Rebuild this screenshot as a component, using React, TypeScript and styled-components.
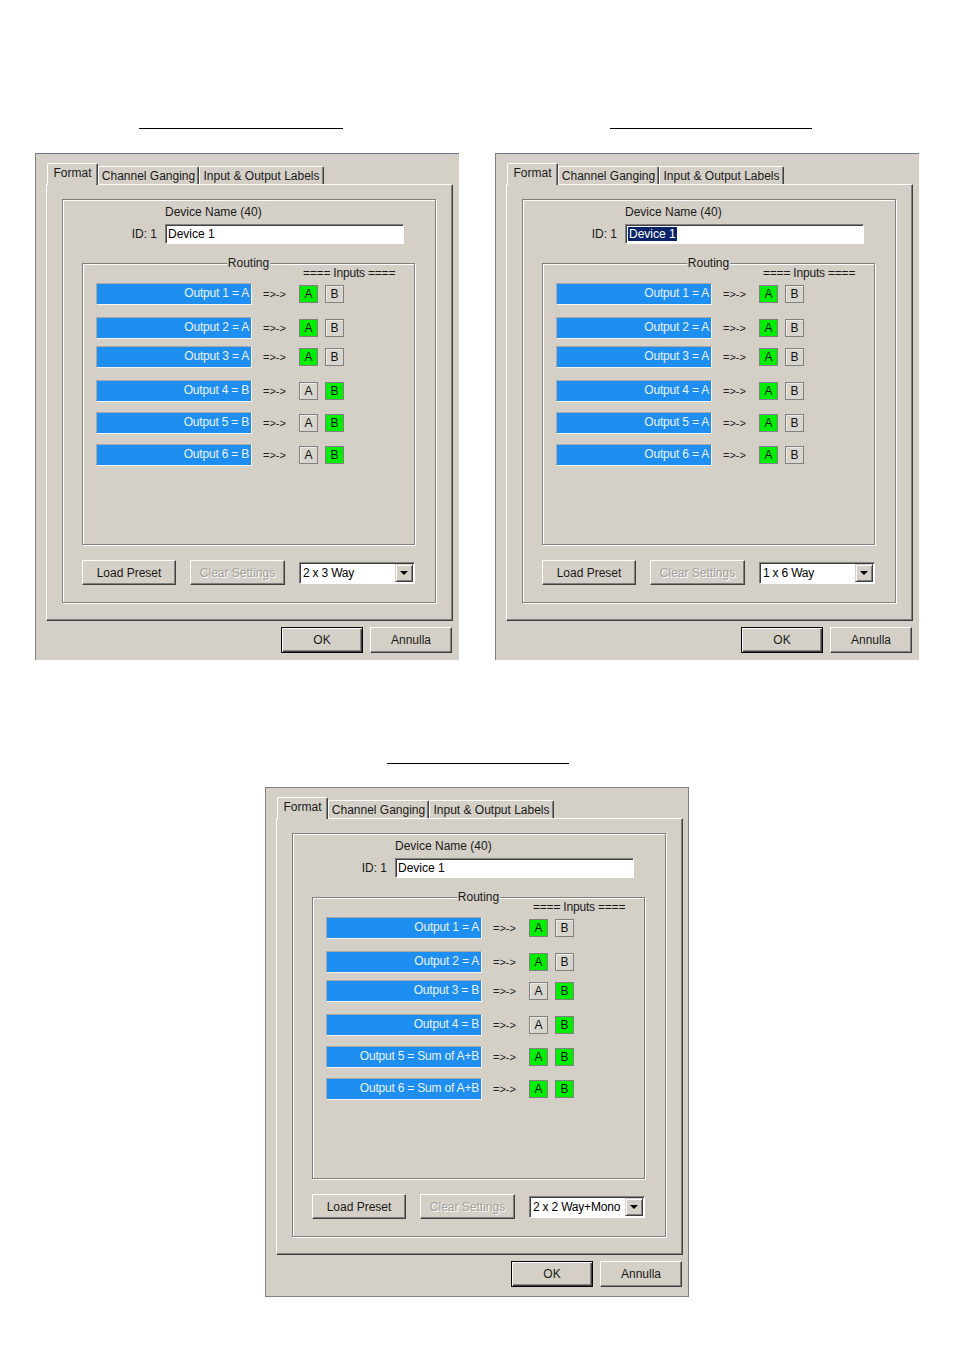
import React from 'react';
import styled, { createGlobalStyle } from 'styled-components';

const face = '#d4d0c8';
const shadow = '#808080';
const darkShadow = '#404040';

const GlobalStyle = createGlobalStyle`
  body {
    margin: 0;
    background: #fff;
    font-family: 'Liberation Sans', Arial, sans-serif;
    font-size: 12px;
    color: #1a1a1a;
  }
`;

const Page = styled.div`
  width: 954px;
  height: 1351px;
  padding-top: 128px;
  box-sizing: border-box;
`;

const TopRow = styled.div`
  display: flex;
  gap: 36px;
  padding-left: 35px;
`;

const BottomRow = styled.div`
  display: flex;
  padding-left: 265px;
  margin-top: 103px;
`;

const Column = styled.div`
  display: flex;
  flex-direction: column;
  width: 424px;
`;

const Underline = styled.div<{ $left: number; $width: number; $space: number }>`
  height: 1px;
  width: ${(p) => p.$width}px;
  margin-left: ${(p) => p.$left}px;
  margin-bottom: ${(p) => p.$space}px;
  background: #000;
`;

const Window = styled.div<{ $full?: boolean }>`
  width: 424px;
  height: ${(p) => (p.$full ? 510 : 507)}px;
  box-sizing: border-box;
  background: ${face};
  padding: 9px 0 0 10px;
  border-left: 1px solid ${shadow};
  border-top: 1px solid ${(p) => (p.$full ? shadow : '#6b7896')};
  border-right: ${(p) => (p.$full ? `1px solid ${shadow}` : 'none')};
  border-bottom: ${(p) => (p.$full ? `1px solid ${shadow}` : 'none')};
`;

const TabStrip = styled.div`
  display: flex;
  align-items: flex-end;
  height: 21px;
  position: relative;
  z-index: 1;
`;

const Tab = styled.div<{ $active?: boolean; $width: number }>`
  width: ${(p) => p.$width}px;
  height: ${(p) => (p.$active ? 22 : 18)}px;
  margin-left: ${(p) => (p.$active ? 1 : 0)}px;
  margin-bottom: ${(p) => (p.$active ? -1 : 0)}px;
  box-sizing: border-box;
  background: ${face};
  border-top: 1px solid #fff;
  border-left: 1px solid #fff;
  border-right: 1px solid ${darkShadow};
  border-radius: 2px 2px 0 0;
  box-shadow: inset -1px 0 0 ${shadow};
  display: flex;
  align-items: center;
  justify-content: center;
  padding-bottom: ${(p) => (p.$active ? 3 : 0)}px;
  white-space: nowrap;
`;

const Panel = styled.div`
  width: 407px;
  height: 437px;
  box-sizing: border-box;
  border-top: 1px solid #fff;
  border-left: 1px solid #fff;
  border-right: 1px solid ${darkShadow};
  border-bottom: 1px solid ${darkShadow};
  box-shadow: inset -1px -1px 0 ${shadow};
  padding: 14px 0 0 15px;
`;

const GroupBox = styled.div`
  width: 374px;
  height: 404px;
  box-sizing: border-box;
  border: 1px solid ${shadow};
  box-shadow: 1px 1px 0 #fff, inset 1px 1px 0 #fff;
  padding-top: 5px;
`;

const NameGrid = styled.div`
  display: grid;
  grid-template-columns: 102px 239px;
  grid-template-rows: 14px 20px;
  row-gap: 5px;
  line-height: 14px;
`;

const FieldLabel = styled.div`
  text-align: right;
  padding-right: 8px;
  align-self: center;
`;

const TextField = styled.div`
  height: 20px;
  box-sizing: border-box;
  background: #fff;
  border-style: solid;
  border-width: 1px;
  border-color: ${shadow} #fff #fff ${shadow};
  box-shadow: inset 1px 1px 0 ${darkShadow};
  padding: 2px 0 0 2px;
  line-height: 14px;
  color: #000;
`;

const Selection = styled.span`
  background: #0a246a;
  color: #fff;
  padding: 0 1px;
`;

const Routing = styled.div`
  position: relative;
  width: 333px;
  height: 282px;
  box-sizing: border-box;
  margin: 19px 0 0 19px;
  border: 1px solid ${shadow};
  box-shadow: 1px 1px 0 #fff, inset 1px 1px 0 #fff;
  padding: 2px 0 0 13px;
`;

const Caption = styled.span`
  position: absolute;
  top: -8px;
  left: 50%;
  transform: translateX(-50%);
  background: ${face};
  padding: 0 1px;
  line-height: 14px;
`;

const InputsLabel = styled.div`
  margin-left: 207px;
  line-height: 14px;
  white-space: nowrap;
  letter-spacing: -0.2px;
`;

const Row = styled.div<{ $gap: number }>`
  display: flex;
  align-items: center;
  margin-top: ${(p) => p.$gap}px;
`;

const OutputBar = styled.div`
  width: 156px;
  height: 22px;
  box-sizing: border-box;
  background: #1e8ef0;
  border-style: solid;
  border-width: 1px;
  border-color: #a8a8a8 #f4f4f4 #f4f4f4 #a8a8a8;
  color: #e8f3ff;
  text-align: right;
  padding-right: 2px;
  line-height: 19px;
  letter-spacing: -0.2px;
  white-space: nowrap;
`;

const Arrow = styled.span`
  width: 47px;
  box-sizing: border-box;
  padding-left: 11px;
  font-size: 11px;
  color: #222;
`;

const InputBox = styled.div<{ $on: boolean }>`
  width: 19px;
  height: 18px;
  box-sizing: border-box;
  margin-right: 7px;
  border: 1px solid ${shadow};
  background: ${(p) => (p.$on ? '#00ef00' : '#d8d5ce')};
  box-shadow: ${(p) => (p.$on ? 'none' : 'inset 1px 1px 0 #eeece8')};
  display: flex;
  align-items: center;
  justify-content: center;
  line-height: 14px;
  color: #111;
`;

const ControlRow = styled.div`
  display: flex;
  align-items: center;
  gap: 14px;
  margin: 15px 0 0 19px;
`;

const Button = styled.div<{ $width: number; $disabled?: boolean; $default?: boolean }>`
  width: ${(p) => p.$width}px;
  height: 25px;
  box-sizing: border-box;
  background: ${face};
  display: flex;
  align-items: center;
  justify-content: center;
  white-space: nowrap;
  color: ${(p) => (p.$disabled ? '#a4a09a' : '#1a1a1a')};
  text-shadow: ${(p) => (p.$disabled ? '1px 1px 0 #fff' : 'none')};
  border-style: solid;
  border-width: 1px;
  border-color: ${(p) => (p.$default ? '#000' : `#fff ${darkShadow} ${darkShadow} #fff`)};
  box-shadow: ${(p) =>
    p.$default
      ? `inset 1px 1px 0 #fff, inset -1px -1px 0 ${darkShadow}, inset -2px -2px 0 ${shadow}`
      : `inset -1px -1px 0 ${shadow}`};
`;

const Combo = styled.div`
  width: 116px;
  height: 22px;
  box-sizing: border-box;
  background: #fff;
  border-style: solid;
  border-width: 1px;
  border-color: ${shadow} #fff #fff ${shadow};
  box-shadow: inset 1px 1px 0 ${darkShadow};
  display: flex;
  align-items: center;
  padding: 1px 1px 1px 3px;
  color: #000;
`;

const ComboText = styled.span`
  flex: 1;
  white-space: nowrap;
  line-height: 14px;
  letter-spacing: -0.2px;
`;

const ComboButton = styled.div`
  width: 18px;
  height: 18px;
  box-sizing: border-box;
  background: ${face};
  border-style: solid;
  border-width: 1px;
  border-color: ${face} ${darkShadow} ${darkShadow} ${face};
  box-shadow: inset 1px 1px 0 #fff, inset -1px -1px 0 ${shadow};
  display: flex;
  align-items: center;
  justify-content: center;
`;

const DownTriangle = styled.span`
  width: 0;
  height: 0;
  border-left: 4px solid transparent;
  border-right: 4px solid transparent;
  border-top: 4px solid #000;
`;

const Footer = styled.div`
  width: 407px;
  display: flex;
  justify-content: flex-end;
  gap: 7px;
  padding-right: 1px;
  box-sizing: border-box;
  margin-top: 6px;
`;

const DialogButton = styled(Button)`
  height: 26px;
`;

type Route = [string, boolean, boolean];

const rowGaps = [3, 12, 7, 12, 10, 10];

type DialogProps = {
  routes: Route[];
  preset: string;
  selected?: boolean;
  full?: boolean;
};

function Dialog({ routes, preset, selected, full }: DialogProps) {
  return (
    <Window $full={full}>
      <TabStrip>
        <Tab $active $width={51}>Format</Tab>
        <Tab $width={101}>Channel Ganging</Tab>
        <Tab $width={125}>Input &amp; Output Labels</Tab>
      </TabStrip>
      <Panel>
        <GroupBox>
          <NameGrid>
            <span />
            <span>Device Name (40)</span>
            <FieldLabel>ID: 1</FieldLabel>
            <TextField>{selected ? <Selection>Device 1</Selection> : 'Device 1'}</TextField>
          </NameGrid>
          <Routing>
            <Caption>Routing</Caption>
            <InputsLabel>==== Inputs ====</InputsLabel>
            {routes.map(([label, a, b], i) => (
              <Row key={label} $gap={rowGaps[i]}>
                <OutputBar>{label}</OutputBar>
                <Arrow>=&gt;-&gt;</Arrow>
                <InputBox $on={a}>A</InputBox>
                <InputBox $on={b}>B</InputBox>
              </Row>
            ))}
          </Routing>
          <ControlRow>
            <Button $width={94}>Load Preset</Button>
            <Button $width={95} $disabled>
              Clear Settings
            </Button>
            <Combo>
              <ComboText>{preset}</ComboText>
              <ComboButton>
                <DownTriangle />
              </ComboButton>
            </Combo>
          </ControlRow>
        </GroupBox>
      </Panel>
      <Footer>
        <DialogButton $width={82} $default>
          OK
        </DialogButton>
        <DialogButton $width={82}>Annulla</DialogButton>
      </Footer>
    </Window>
  );
}

const twoByThree: Route[] = [
  ['Output 1 = A', true, false],
  ['Output 2 = A', true, false],
  ['Output 3 = A', true, false],
  ['Output 4 = B', false, true],
  ['Output 5 = B', false, true],
  ['Output 6 = B', false, true],
];

const oneBySix: Route[] = [1, 2, 3, 4, 5, 6].map((n) => [`Output ${n} = A`, true, false]);

const twoByTwoMono: Route[] = [
  ['Output 1 = A', true, false],
  ['Output 2 = A', true, false],
  ['Output 3 = B', false, true],
  ['Output 4 = B', false, true],
  ['Output 5 = Sum of A+B', true, true],
  ['Output 6 = Sum of A+B', true, true],
];

export default function App() {
  return (
    <Page>
      <GlobalStyle />
      <TopRow>
        <Column>
          <Underline $left={104} $width={204} $space={24} />
          <Dialog routes={twoByThree} preset="2 x 3 Way" />
        </Column>
        <Column>
          <Underline $left={115} $width={202} $space={24} />
          <Dialog routes={oneBySix} preset="1 x 6 Way" selected />
        </Column>
      </TopRow>
      <BottomRow>
        <Column>
          <Underline $left={122} $width={182} $space={23} />
          <Dialog routes={twoByTwoMono} preset="2 x 2 Way+Mono" full />
        </Column>
      </BottomRow>
    </Page>
  );
}
